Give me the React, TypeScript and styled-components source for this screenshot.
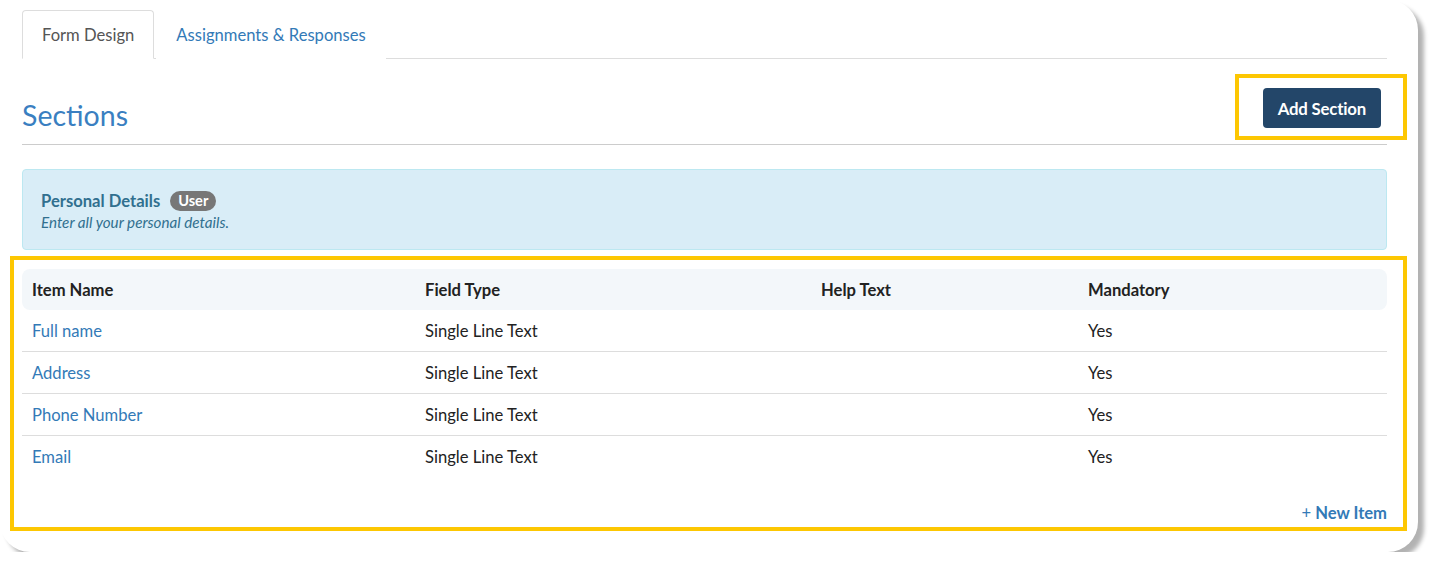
import styled, { createGlobalStyle } from 'styled-components';

const GlobalStyle = createGlobalStyle`
  body {
    margin: 0;
    background: #ffffff;
    font-family: Lato, "Open Sans", sans-serif;
  }
`;

const Card = styled.div`
  box-sizing: border-box;
  width: 1418px;
  height: 552px;
  padding: 10px 31px 0 22px;
  background: #ffffff;
  border-radius: 0 30px 30px 30px;
  box-shadow: 6px 6px 4px rgba(0, 0, 0, 0.3);
`;

const TabBar = styled.div`
  display: flex;
  gap: 2px;
  border-bottom: 1px solid #dddddd;
`;

const Tab = styled.div<{ active?: boolean }>`
  box-sizing: border-box;
  height: 49px;
  margin-bottom: -1px;
  padding: 0 19px;
  display: flex;
  align-items: center;
  font-size: 16.6px;
  border: 1px solid ${(p) => (p.active ? '#dddddd' : 'transparent')};
  border-bottom-color: ${(p) => (p.active ? '#ffffff' : 'transparent')};
  border-radius: 4px 4px 0 0;
  background: #ffffff;
  color: ${(p) => (p.active ? '#555555' : '#337ab7')};
`;

const Header = styled.div`
  margin-top: 29px;
  padding-bottom: 9px;
  display: flex;
  justify-content: space-between;
  align-items: flex-start;
  border-bottom: 1px solid #cccccc;
`;

const Title = styled.h1`
  margin: 7px 0 0;
  font-size: 28.5px;
  line-height: 40px;
  font-weight: 400;
  color: #3a7fc1;
`;

const ButtonWrap = styled.div`
  position: relative;
  margin-right: 6px;
`;

const Highlight = styled.div<{ inset: string }>`
  position: absolute;
  inset: ${(p) => p.inset};
  border: 4px solid #fdc702;
  pointer-events: none;
`;

const PrimaryButton = styled.button`
  height: 40px;
  padding: 0 15px;
  border: none;
  border-radius: 4px;
  background: #234669;
  color: #ffffff;
  font-family: Lato, sans-serif;
  font-size: 16.8px;
  font-weight: 700;
  letter-spacing: -0.2px;
`;

const Panel = styled.div`
  margin-top: 24px;
  padding: 20px 18px 17px;
  background: #d9edf7;
  border: 1px solid #bce8f1;
  border-radius: 4px;
  color: #31708f;
`;

const PanelTitle = styled.div`
  display: flex;
  align-items: center;
  gap: 10px;
  font-size: 16.6px;
  line-height: 22px;
  font-weight: 700;
`;

const Badge = styled.span`
  height: 20px;
  padding: 0 8px;
  display: inline-flex;
  align-items: center;
  border-radius: 10px;
  background: #777777;
  color: #ffffff;
  font-size: 14.6px;
  font-weight: 700;
`;

const PanelText = styled.div`
  font-size: 15.2px;
  line-height: 20px;
  font-style: italic;
`;

const TableWrap = styled.div`
  position: relative;
  margin-top: 19px;
`;

const Row = styled.div<{ head?: boolean }>`
  display: grid;
  grid-template-columns: 393px 396px 267px 1fr;
  height: 41px;
  align-items: center;
  font-size: 16.6px;
  color: #222222;
  font-weight: ${(p) => (p.head ? 700 : 400)};
  background: ${(p) => (p.head ? '#f3f7fa' : 'transparent')};
  border-radius: ${(p) => (p.head ? '8px' : '0')};
  & + & + & {
    border-top: 1px solid #dddddd;
  }
`;

const Cell = styled.div<{ link?: boolean }>`
  padding: 0 10px;
  color: ${(p) => (p.link ? '#337ab7' : 'inherit')};
`;

const Footer = styled.div`
  margin-top: 25px;
  display: flex;
  justify-content: flex-end;
  font-size: 16.6px;
  line-height: 22px;
  color: #337ab7;
`;

const NewItem = styled.span`
  font-weight: 700;
  margin-left: 4px;
`;

const items = ['Full name', 'Address', 'Phone Number', 'Email'];

export default function App() {
  return (
    <>
      <GlobalStyle />
      <Card>
        <TabBar>
          <Tab active>Form Design</Tab>
          <Tab>Assignments &amp; Responses</Tab>
        </TabBar>
        <Header>
          <Title>Sections</Title>
          <ButtonWrap>
            <PrimaryButton>Add Section</PrimaryButton>
            <Highlight inset="-14px -26px -12px -28px" />
          </ButtonWrap>
        </Header>
        <Panel>
          <PanelTitle>
            Personal Details <Badge>User</Badge>
          </PanelTitle>
          <PanelText>Enter all your personal details.</PanelText>
        </Panel>
        <TableWrap>
          <Row head>
            <Cell>Item Name</Cell>
            <Cell>Field Type</Cell>
            <Cell>Help Text</Cell>
            <Cell>Mandatory</Cell>
          </Row>
          {items.map((name) => (
            <Row key={name}>
              <Cell link>{name}</Cell>
              <Cell>Single Line Text</Cell>
              <Cell></Cell>
              <Cell>Yes</Cell>
            </Row>
          ))}
          <Footer>
            +<NewItem>New Item</NewItem>
          </Footer>
          <Highlight inset="-13px -20px -7px -12px" />
        </TableWrap>
      </Card>
    </>
  );
}
